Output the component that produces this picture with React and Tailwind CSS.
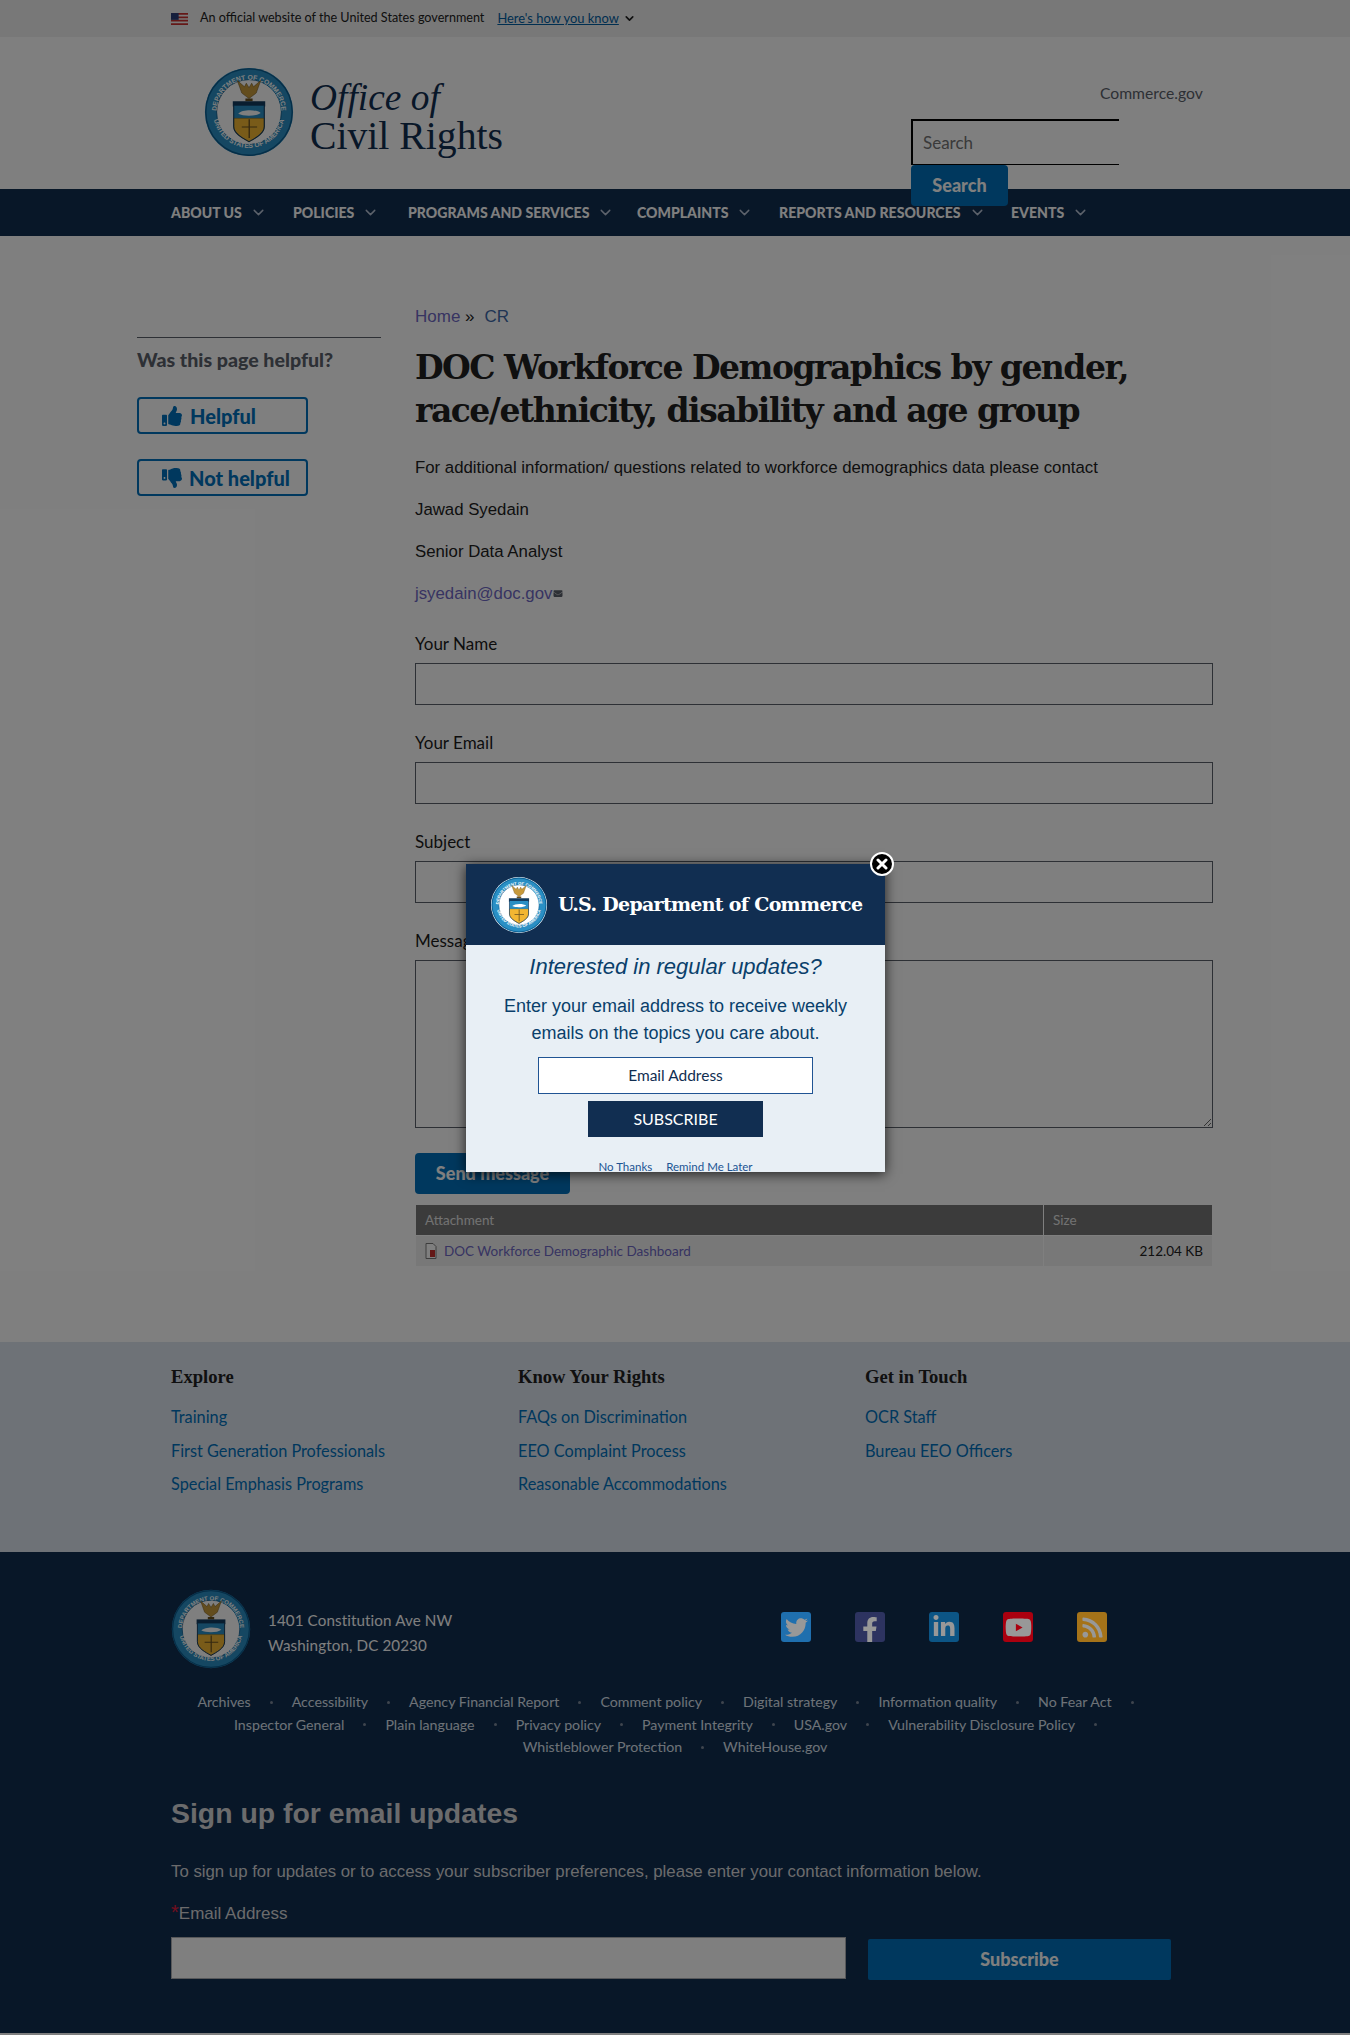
import React from 'react';
import { FaThumbsUp, FaThumbsDown, FaTwitter, FaFacebookF, FaLinkedinIn, FaRss, FaYoutube, FaEnvelope } from 'react-icons/fa';
import { FiChevronDown } from 'react-icons/fi';

const sans = "font-['Lato','Noto_Sans',sans-serif]";

const navItems = [
  { label: 'About us', w: 'w-[122px]' },
  { label: 'Policies', w: 'w-[115px]' },
  { label: 'Programs and services', w: 'w-[229px]' },
  { label: 'Complaints', w: 'w-[142px]' },
  { label: 'Reports and resources', w: 'w-[232px]' },
  { label: 'Events', w: 'w-[90px]' },
];

const footerCols = [
  { title: 'Explore', links: ['Training', 'First Generation Professionals', 'Special Emphasis Programs'] },
  { title: 'Know Your Rights', links: ['FAQs on Discrimination', 'EEO Complaint Process', 'Reasonable Accommodations'] },
  { title: 'Get in Touch', links: ['OCR Staff', 'Bureau EEO Officers'] },
];

const policyRows = [
  ['Archives', 'Accessibility', 'Agency Financial Report', 'Comment policy', 'Digital strategy', 'Information quality', 'No Fear Act'],
  ['Inspector General', 'Plain language', 'Privacy policy', 'Payment Integrity', 'USA.gov', 'Vulnerability Disclosure Policy'],
  ['Whistleblower Protection', 'WhiteHouse.gov'],
];

const Seal = ({ className, id }) => (
  <svg viewBox="0 0 100 100" className={className}>
    <defs>
      <path id={`${id}-top`} d="M 14 50 A 36 36 0 0 1 86 50" />
      <path id={`${id}-bot`} d="M 10 50 A 40 40 0 0 0 90 50" />
    </defs>
    <circle cx="50" cy="50" r="49" fill="#2a8fc4" />
    <circle cx="50" cy="50" r="36" fill="#ffffff" />
    <circle cx="50" cy="50" r="48" fill="none" stroke="#0b5c8f" strokeWidth="1.5" />
    <circle cx="50" cy="50" r="36" fill="none" stroke="#0b5c8f" strokeWidth="1" />
    <text fontSize="7.5" fontWeight="700" fill="#ffffff" fontFamily="Liberation Sans, sans-serif">
      <textPath href={`#${id}-top`} startOffset="50%" textAnchor="middle">DEPARTMENT OF COMMERCE</textPath>
    </text>
    <text fontSize="7.5" fontWeight="700" fill="#ffffff" fontFamily="Liberation Sans, sans-serif">
      <textPath href={`#${id}-bot`} startOffset="50%" textAnchor="middle">UNITED STATES OF AMERICA</textPath>
    </text>
    <path d="M50 35 L42 29 L37 15 L45 22 L47 18 L50 23 L53 18 L55 22 L63 15 L58 29 Z" fill="#c79a3c" stroke="#6b5220" strokeWidth="0.6" />
    <path d="M46 35 h8 v3 h-8 z" fill="#6b5220" />
    <path d="M32 38 H68 V44 H32 Z" fill="#123a5e" />
    <path d="M33 43 H67 V58 H33 Z" fill="#2a8fc4" />
    <path d="M33 57 H67 V66 C67 74 57 79 50 83 C43 79 33 74 33 66 Z" fill="#f2b632" stroke="#8a6a1c" strokeWidth="0.6" />
    <path d="M33 43 V66 C33 74 43 79 50 83 C57 79 67 74 67 66 V43" fill="none" stroke="#123a5e" strokeWidth="1.2" />
    <path d="M38 52 C42 47 58 47 63 51 C58 55 44 55 38 52 Z" fill="#ffffff" />
    <path d="M49.5 58 h1.5 v21 h-1.5 z M42 66 h17 v1.3 h-17 z" fill="#6b5220" />
  </svg>
);

const Field = ({ label, tall }) => (
  <div className="flex flex-col">
    <label className={`${sans} text-[17px] leading-[24px] text-[#1b1b1b] mb-[7px]`}>{label}</label>
    {tall ? (
      <textarea className="block w-full h-[168px] border border-[#5b616b] bg-white" />
    ) : (
      <input className="block w-full h-[42px] border border-[#5b616b] bg-white" />
    )}
  </div>
);

// the social tiles read brighter than the dim layer in the reference, so they sit above it
const Social = ({ bg, children }) => (
  <a className={`relative z-30 flex w-[30px] h-[30px] items-center justify-center rounded-[3px] text-[#989898] ${bg}`}>{children}</a>
);

const App = () => {
  return (
    <div className="relative min-h-[2035px] bg-white overflow-hidden">
      {/* gov banner */}
      <div className={`${sans} h-[37px] bg-[#f0f0f0] pl-[171px] flex items-center text-[12.6px] text-[#212121]`}>
        <svg viewBox="0 0 20 14" className="w-[17px] h-[12px] mr-[12px]">
          <rect width="20" height="14" fill="#f4f4f4" />
          <path d="M0 0h20v2H0zM0 4h20v2H0zM0 8h20v2H0zM0 12h20v2H0z" fill="#c8312f" />
          <rect width="9" height="8" fill="#2a3f7a" />
        </svg>
        <span>An official website of the United States government</span>
        <a className="ml-[13px] text-[#005ea2] underline text-[12.9px]">Here&apos;s how you know</a>
        <FiChevronDown className="ml-[4px] w-[13px] h-[13px] text-[#212121]" strokeWidth={3} />
      </div>

      {/* header */}
      <header className="relative z-10 h-[152px] bg-white flex">
        <div className="flex items-center pl-[204px] w-[911px] h-[150px]">
          <Seal id="hdr" className="w-[90px] h-[90px] mt-[-1px]" />
          <div className="ml-[16px] font-['Liberation_Serif',serif] text-[39.7px] leading-[38px] text-[#112e51] mt-[9px]">
            <div className="italic text-[37.4px]">Office of</div>
            <div>Civil Rights</div>
          </div>
        </div>
        <div className="relative flex flex-col">
          <div className={`${sans} text-[15.7px] leading-[20px] text-[#5b616b] pl-[189px] pt-[46px] whitespace-nowrap`}>Commerce.gov</div>
          <input
            placeholder="Search"
            className={`${sans} shrink-0 mt-[16px] w-[208px] h-[46px] border-t-2 border-l-2 border-b border-black px-[10px] text-[17px] placeholder:text-[#757575] bg-white`}
          />
          <button className={`${sans} shrink-0 w-[97px] h-[41px] rounded-[4px] bg-[#0071bc] text-white font-black text-[18px]`}>Search</button>
        </div>
      </header>

      {/* nav */}
      <nav className={`${sans} h-[47px] bg-[#112e51] pl-[171px] flex items-center text-[14.1px] font-black uppercase text-white`}>
        {navItems.map((item) => (
          <a key={item.label} className={`flex items-center whitespace-nowrap ${item.w}`}>
            {item.label}
            <FiChevronDown className="ml-[8px] w-[17px] h-[17px] text-[#b9c4d6]" />
          </a>
        ))}
      </nav>

      {/* main */}
      <main className="h-[1106px] flex pl-[137px]">
        <aside className="w-[244px] mr-[34px] pt-[101px]">
          <div className="border-t border-[#5b616b] pt-[10px]">
            <h2 className={`${sans} text-[19.6px] leading-[24px] font-black text-[#5b616b]`}>Was this page helpful?</h2>
            <button className={`${sans} mt-[25px] flex items-center w-[171px] h-[37px] border-2 border-[#0071bc] rounded-[4px] pl-[23px] text-[#0071bc] text-[20px] font-black`}>
              <FaThumbsUp className="w-[20px] h-[20px] mr-[8px]" />
              Helpful
            </button>
            <button className={`${sans} mt-[25px] flex items-center w-[171px] h-[37px] border-2 border-[#0071bc] rounded-[4px] pl-[23px] text-[#0071bc] text-[20px] font-black`}>
              <FaThumbsDown className="w-[20px] h-[20px] mr-[7px]" />
              Not helpful
            </button>
          </div>
        </aside>

        <div className="w-[798px] pt-[71px] font-['Liberation_Sans',Arial,sans-serif]">
          <div className="text-[17px] leading-[20px] text-[#6f68c4]">
            Home<span className="text-[#212121]"> »</span>
            <span className="ml-[10px] text-[#3f6aa8]">CR</span>
          </div>
          <h1 className="mt-[19px] font-['DejaVu_Serif',serif] text-[33px] leading-[43px] font-bold text-[#212121] tracking-[-1.5px] w-[780px]">
            DOC Workforce Demographics by gender, race/ethnicity, disability and age group
          </h1>
          <div className="mt-[25px] flex flex-col gap-[21px] text-[16.8px] leading-[21px] text-[#212121]">
            <p>For additional information/ questions related to workforce demographics data please contact</p>
            <p>Jawad Syedain</p>
            <p>Senior Data Analyst</p>
            <p className="flex items-center text-[#6f68c4]">
              jsyedain@doc.gov
              <FaEnvelope className="w-[12px] h-[9px] text-[#5b616b]" />
            </p>
          </div>
          <form className="mt-[28px] flex flex-col gap-[26px]">
            <Field label="Your Name" />
            <Field label="Your Email" />
            <Field label="Subject" />
            <Field label="Message" tall />
          </form>
          <button className={`${sans} mt-[25px] w-[155px] h-[41px] rounded-[4px] bg-[#0071bc] text-white font-black text-[18px]`}>Send message</button>
          <table className={`${sans} mt-[10px] w-full text-[13.5px] border-separate border-spacing-[1px]`}>
            <thead>
              <tr className="bg-[#767676] text-[#e4e4e4] text-left h-[30px]">
                <th className="w-[627px] px-[9px] font-normal">Attachment</th>
                <th className="px-[9px] font-normal">Size</th>
              </tr>
            </thead>
            <tbody>
              <tr className="bg-[#f1f1f1] h-[30px]">
                <td className="px-[9px]">
                  <span className="flex items-center text-[#6f68c4]">
                    <svg viewBox="0 0 12 16" className="w-[12px] h-[16px] mr-[7px] shrink-0">
                      <path d="M1 .5h7l3 3v12H1z" fill="#ffffff" stroke="#7a7a7a" />
                      <rect x="5" y="7" width="5" height="7" fill="#c8312f" />
                    </svg>
                    DOC Workforce Demographic Dashboard
                  </span>
                </td>
                <td className="px-[9px] text-right text-[#212121]">212.04 KB</td>
              </tr>
            </tbody>
          </table>
        </div>
      </main>

      {/* footer links */}
      <section className={`${sans} h-[210px] bg-[#dce4ef] pl-[171px] pt-[23px] flex`}>
        {footerCols.map((col) => (
          <div key={col.title} className="w-[347px]">
            <h3 className="font-['Liberation_Serif',serif] font-bold text-[18.6px] leading-[24px] text-[#212121]">{col.title}</h3>
            <ul className="mt-[16px] flex flex-col gap-[9.5px] text-[16.3px] leading-[24px] text-[#0071bc]">
              {col.links.map((l) => <li key={l}>{l}</li>)}
            </ul>
          </div>
        ))}
      </section>

      {/* dark footer */}
      <footer className="h-[481px] bg-[#112e51] text-white">
        <div className={`${sans} flex items-center pl-[171px] pt-[37px]`}>
          <Seal id="ftr" className="w-[80px] h-[80px]" />
          <div className="ml-[17px] mt-[8px] w-[475px] text-[15.2px] leading-[25px] tracking-[0.1px]">
            <div>1401 Constitution Ave NW</div>
            <div>Washington, DC 20230</div>
          </div>
          <div className="flex gap-[44px] mt-[-4px] ml-[38px]">
            <Social bg="bg-[#1f6fae]"><FaTwitter className="w-[23px] h-[23px]" /></Social>
            <Social bg="bg-[#2d3360]"><FaFacebookF className="w-[22px] h-[25px] mt-[5px]" /></Social>
            <Social bg="bg-[#0c5585]"><FaLinkedinIn className="w-[24px] h-[24px]" /></Social>
            <Social bg="bg-[#aa000f]"><FaYoutube className="w-[27px] h-[27px]" /></Social>
            <Social bg="bg-[#a57319]"><FaRss className="w-[23px] h-[23px]" /></Social>
          </div>
        </div>
        <div className={`${sans} mt-[22px] flex flex-col items-center text-[14.2px] leading-[22.5px] text-[#dce4ef]`}>
          {policyRows.map((row, i) => (
            <div key={i} className="flex">
              {row.map((p, j) => (
                <span key={p} className="flex items-center">
                  {p}
                  {(j < row.length - 1 || i < 2) && <span className="mx-[19px] w-[3px] h-[3px] rounded-full bg-[#7d8a9c]" />}
                </span>
              ))}
            </div>
          ))}
        </div>
        <div className="pl-[171px] pt-[37px] font-['Liberation_Sans',Arial,sans-serif] text-[#d6d7d9]">
          <h2 className="text-[28.4px] leading-[34px] font-bold">Sign up for email updates</h2>
          <p className="mt-[30px] text-[16.8px] leading-[24px]">To sign up for updates or to access your subscriber preferences, please enter your contact information below.</p>
          <label className="block mt-[18px] text-[17px] leading-[24px]"><span className="text-[#e31c3d] text-[20px] leading-[20px]">*</span>Email Address</label>
          <div className="mt-[11px] flex items-start">
            <input className="w-[675px] h-[42px] bg-white border border-[#aeb0b5]" />
            <button className={`${sans} ml-[22px] mt-[2px] w-[303px] h-[41px] bg-[#0071bc] rounded-[2px] text-[18px] font-black text-white`}>Subscribe</button>
          </div>
        </div>
      </footer>

      {/* dim layer + newsletter popup */}
      <div className="absolute inset-0 z-20 bg-black/50" />
      <div className="absolute z-30 left-[466px] top-[864px] w-[419px] h-[308px] bg-[#e8eff5] shadow-[0_2px_12px_rgba(0,0,0,0.75)]">
        <div className="h-[81px] bg-[#112e51] flex items-center pl-[25px]">
          <Seal id="pop" className="w-[56px] h-[56px] rounded-full bg-white" />
          <span className="ml-[11px] font-['DejaVu_Serif',serif] font-bold text-[19px] tracking-[-0.7px] text-white whitespace-nowrap">U.S. Department of Commerce</span>
        </div>
        <div className="h-[227px] overflow-hidden flex flex-col items-center font-['Liberation_Sans',Arial,sans-serif] text-[#0a3f6b]">
          <div className="mt-[8px] text-[22px] leading-[28px] italic">Interested in regular updates?</div>
          <div className="mt-[12px] text-center text-[18px] leading-[27px]">
            Enter your email address to receive weekly<br />emails on the topics you care about.
          </div>
          <div className={`${sans} mt-[10px] w-[275px] h-[37px] shrink-0 flex items-center justify-center bg-white border border-[#205493] text-[15.5px] text-[#112e51]`}>Email Address</div>
          <div className={`${sans} mt-[7px] w-[175px] h-[36px] shrink-0 flex items-center justify-center bg-[#112e51] text-[16px] text-white`}>SUBSCRIBE</div>
          <div className={`${sans} mt-[24px] flex gap-[14px] text-[11.5px] leading-[12px] text-[#205493]`}>
            <span>No Thanks</span>
            <span>Remind Me Later</span>
          </div>
        </div>
        <button className="absolute right-[-9px] top-[-12px] w-[24px] h-[24px] rounded-full bg-black border-2 border-white flex items-center justify-center">
          <svg viewBox="0 0 12 12" className="w-[12px] h-[12px]">
            <path d="M2 2 L10 10 M10 2 L2 10" stroke="#ffffff" strokeWidth="3" strokeLinecap="round" />
          </svg>
        </button>
      </div>
    </div>
  );
};

export default App;
